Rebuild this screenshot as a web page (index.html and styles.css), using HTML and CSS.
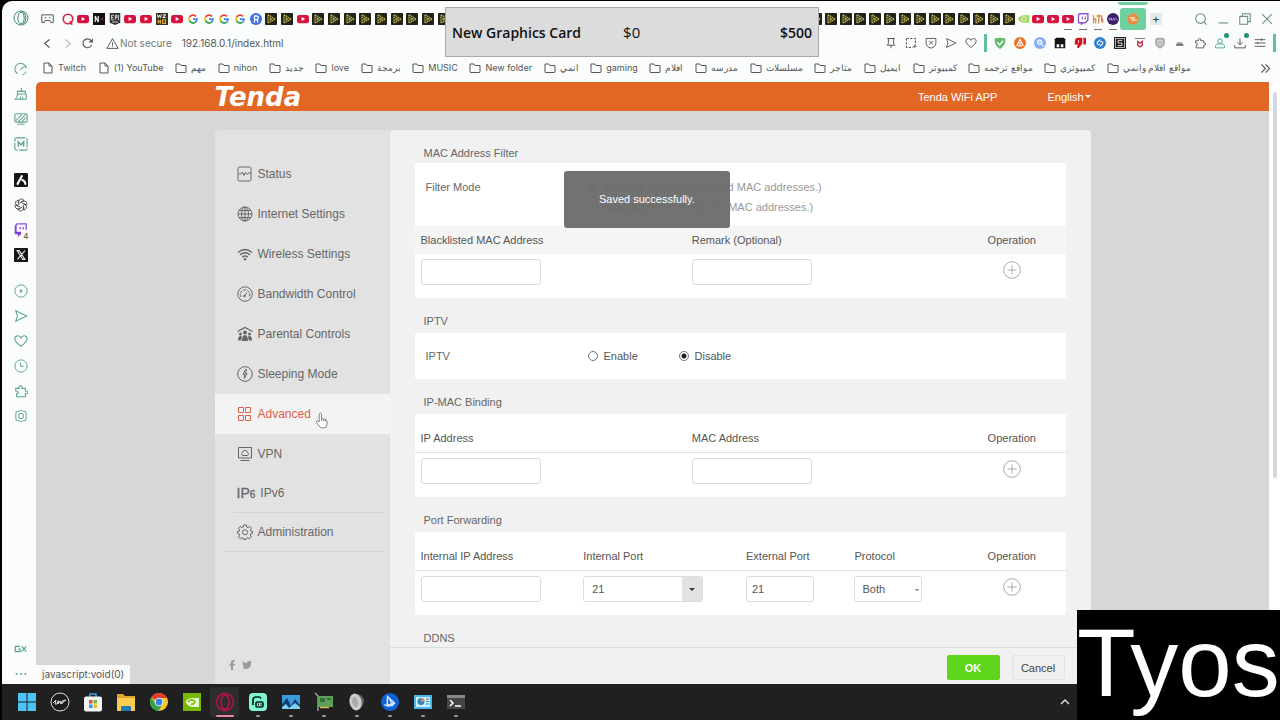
FILE: index.html
```html
<!DOCTYPE html>
<html lang="en">
<head>
    <meta charset="UTF-8">
    <title>Tenda | Advanced</title>
    <link rel="stylesheet" href="styles.css">
</head>
<body>
    <!-- icon sprite -->
    <svg class="sprite" aria-hidden="true">
        <symbol id="i-pad" viewBox="0 0 16 16"><path d="M1 3.500h14v9.500h-3l-1-2.500H5L4 13H1zM4.500 7h2M10 7h1.500" fill="none" stroke="currentColor" stroke-width="1.200"/></symbol>
        <symbol id="i-opera" viewBox="0 0 16 16"><circle cx="8" cy="8" r="7" fill="none" stroke="currentColor"/><ellipse cx="8" cy="8" rx="3.200" ry="5.800" fill="none" stroke="currentColor"/><path d="M9 1.500c5 2 5 11 0 13" fill="none" stroke="currentColor"/></symbol>
        <symbol id="i-q" viewBox="0 0 16 16"><circle cx="8" cy="8" r="6.300" fill="none" stroke="#d3264c" stroke-width="2.200"/><path d="M10.500 11l3 4.500" stroke="#d3264c" stroke-width="2.400"/></symbol>
        <symbol id="i-yt" viewBox="0 0 16 16"><rect y="2.500" width="16" height="11" rx="3" fill="#d8123f"/><path d="M6.200 5.300v5.400L11 8z" fill="#fff"/></symbol>
        <symbol id="i-n" viewBox="0 0 16 16"><rect width="16" height="16" fill="#111"/><path d="M3 12V4l4 8V4" fill="none" stroke="#eee" stroke-width="1.600"/><path d="M10 6l4 4M14 6l-4 4" stroke="#a33"/></symbol>
        <symbol id="i-epic" viewBox="0 0 16 16"><path d="M1 0h14v13l-7 3-7-3z" fill="#333"/><path d="M6.500 3H3.500v6h3M3.500 6h2M8.500 9V3h2v3h-2M13.500 3h-1v6h1M4 12h8" fill="none" stroke="#fff"/></symbol>
        <symbol id="i-wz" viewBox="0 0 16 16"><rect width="16" height="16" fill="#3a3126"/><path d="M2 2l1 4 1.500-3L6 6l1-4M9 2.500h4L9 6h4" fill="none" stroke="#fff" stroke-width="1.300"/><path d="M3 9v5M6 9v5M3 11.500h3M9 9v5h3.500V9z" fill="none" stroke="#e9b233" stroke-width="1.500"/></symbol>
        <symbol id="i-g" viewBox="0 0 16 16"><g fill="none" stroke-width="2.400"><path d="M12 4.500A5.300 5.300 0 0 0 3.500 5.500" stroke="#ea4335"/><path d="M3.500 5.300a5.300 5.300 0 0 0 0 5.400" stroke="#fbbc05"/><path d="M3.500 10.400a5.300 5.300 0 0 0 8 1.800" stroke="#34a853"/><path d="M8 8.200h5.200a5.300 5.300 0 0 1-1.800 4" stroke="#4285f4"/></g></symbol>
        <symbol id="i-r" viewBox="0 0 16 16"><circle cx="8" cy="8" r="8" fill="#3f6fe0"/><path d="M6 12.500V4h2.800a2.300 2.300 0 0 1 0 4.700H6M8.700 8.700L11 12.500" fill="none" stroke="#fff" stroke-width="1.700"/></symbol>
        <symbol id="i-play" viewBox="0 0 16 16"><rect width="16" height="16" rx="1" fill="#22241c"/><path d="M4 2.500l9.500 5.500L4 13.500z" fill="none" stroke="#c4b04c" stroke-width="1.800" stroke-dasharray="2 .8"/><path d="M6 5.500L10.500 8 6 10.500z" fill="#9aa84c"/></symbol>
        <symbol id="i-nv" viewBox="0 0 16 16"><path d="M0 8q3-5 8-5h7v10H8Q3 13 0 8z" fill="#a3d65c"/><circle cx="8" cy="8" r="3" fill="none" stroke="#fff"/></symbol>
        <symbol id="i-twitch" viewBox="0 0 16 16"><path d="M3 1h11.500v8.500L11 13H8l-2 2v-2H2V4z" fill="#fff" stroke="#8a54d8" stroke-width="1.800"/><path d="M7 4.500v4M11 4.500v4" stroke="#8a54d8" stroke-width="1.500"/></symbol>
        <symbol id="i-ht" viewBox="0 0 16 16"><path d="M2 3v11M2 8h3v6M9 2v12M6 4h6M13 3v9" fill="none" stroke="#d38a4a" stroke-width="1.700"/><path d="M12 7q4 0 2 6" fill="none" stroke="#b9482e"/></symbol>
        <symbol id="i-max" viewBox="0 0 16 16"><circle cx="8" cy="8" r="8" fill="#3b2268"/><path d="M3 10V6.500l1.500 2 1.500-2V10M7.500 10L9 6.500l1.500 3.500M11.500 6.500L14 10" fill="none" stroke="#cbb4ee"/></symbol>
        <symbol id="i-tenda" viewBox="0 0 16 16"><circle cx="8" cy="8" r="7.500" fill="#ee8a3c"/><path d="M3.500 6.500h7M7 6.500v4.500M8 9.500h5" stroke="#ffe9cf" stroke-width="1.600"/></symbol>

        <symbol id="i-page" viewBox="0 0 12 12"><path d="M2 1h5l3 3v7H2zM7 1v3h3" fill="none" stroke="currentColor"/></symbol>
        <symbol id="i-folder" viewBox="0 0 12 12"><path d="M1 2h4l1 1.500h5V10q0 .5-.5.500h-9Q1 10.500 1 10z" fill="none" stroke="currentColor"/></symbol>

        <symbol id="i-back" viewBox="0 0 16 16"><path d="M10.500 3l-6 5 6 5" fill="none" stroke="currentColor" stroke-width="1.500"/></symbol>
        <symbol id="i-fwd" viewBox="0 0 16 16"><path d="M5.500 3l6 5-6 5" fill="none" stroke="currentColor" stroke-width="1.500"/></symbol>
        <symbol id="i-reload" viewBox="0 0 16 16"><path d="M13 10a5.500 5.500 0 1 1-1-6l2 2M14 2v4h-4" fill="none" stroke="currentColor" stroke-width="1.400"/></symbol>
        <symbol id="i-warn" viewBox="0 0 16 16"><path d="M8 2l7 12H1zM8 6.500v4M8 11.500v1" fill="none" stroke="currentColor" stroke-width="1.200"/></symbol>
        <symbol id="i-pin" viewBox="0 0 16 16"><path d="M3 2h10M4.500 2v7L3 11h10l-1.500-2V2M8 11v4" fill="none" stroke="currentColor" stroke-width="1.300"/></symbol>
        <symbol id="i-snap" viewBox="0 0 16 16"><path d="M2 2h12v9M2 2v12h9" fill="none" stroke="currentColor" stroke-width="1.400" stroke-dasharray="3 2"/><path d="M13 10v5M10.500 12.500h5" stroke="currentColor"/></symbol>
        <symbol id="i-shieldx" viewBox="0 0 16 16"><path d="M1.500 2h13v7q0 4-6.500 6-6.500-2-6.500-6zM5.500 5l5 5M10.500 5l-5 5" fill="none" stroke="currentColor" stroke-width="1.200"/></symbol>
        <symbol id="i-send" viewBox="0 0 16 16"><path d="M2 2l12.500 6L2 14l2-6z" fill="none" stroke="currentColor" stroke-width="1.200"/></symbol>
        <symbol id="i-heart" viewBox="0 0 16 16"><path d="M8 14Q1 9 1 5.500 1.200 2 4.500 2 7 2 8 4.500 9 2 11.500 2 14.800 2 15 5.500 15 9 8 14z" fill="none" stroke="currentColor" stroke-width="1.200"/></symbol>
        <symbol id="i-adguard" viewBox="0 0 16 16"><path d="M1 2q7-2 14 0 1 9-7 14Q0 11 1 2z" fill="#62ba6b"/><path d="M4.500 7l3 3.500L12 5" fill="none" stroke="#fff" stroke-width="1.800"/></symbol>
        <symbol id="i-orange" viewBox="0 0 16 16"><circle cx="8" cy="8" r="8" fill="#e8722c"/><path d="M8 3l2.500 5h-5zM3.500 12l2-4M12.500 12l-2-4M5 12h2l1-2 1 2h2" fill="none" stroke="#fff" stroke-width="1.400"/></symbol>
        <symbol id="i-lens" viewBox="0 0 16 16"><circle cx="8" cy="8" r="8" fill="#86aef0"/><circle cx="7.500" cy="7" r="3.200" fill="#b9d2fb" stroke="#fff" stroke-width="1.300"/><path d="M10 9.500l3 3" stroke="#fff" stroke-width="1.500"/></symbol>
        <symbol id="i-tamper" viewBox="0 0 16 16"><path d="M3 1h10l2 2v12H1V3z" fill="#111"/><path d="M3.500 9.500h3.500v4H3.500zM9 9.500h3.500v4H9z" fill="#fff"/></symbol>
        <symbol id="i-down" viewBox="0 0 16 16"><path d="M11 1H5Q1 1 1 8v2h4l-1 4 2 1 5-6zM12.500 1H16v9h-3.500z" fill="#d4141f"/><path d="M6 4v4" stroke="#fff"/></symbol>
        <symbol id="i-shazam" viewBox="0 0 16 16"><circle cx="8" cy="8" r="8" fill="#2f80cf"/><path d="M8.500 3.500L5 6.500q-1.500 1.500 0 3 1.500 1 3 0M7.500 12.500L11 9.500q1.500-1.500 0-3-1.500-1-3 0" fill="none" stroke="#fff" stroke-width="1.600"/></symbol>
        <symbol id="i-box" viewBox="0 0 16 16"><rect width="16" height="16" fill="#222"/><rect x="2" y="2" width="12" height="12" fill="none" stroke="#ddd"/><path d="M11 4.500H5.500V8h5v3.500H5" fill="none" stroke="#ddd" stroke-width="1.300"/></symbol>
        <symbol id="i-mc" viewBox="0 0 16 16"><path d="M1 2h14" stroke="#888" stroke-width="1.500"/><path d="M5 6l3 2 3-2v5l-3 2-3-2z" fill="none" stroke="#c23a4b" stroke-width="2"/></symbol>
        <symbol id="i-gray" viewBox="0 0 16 16"><path d="M1.500 2L8 .5 14.500 2v7q-1 4-6.500 6.500Q2.500 13 1.500 9z" fill="#aaa"/><circle cx="8" cy="7.500" r="3.500" fill="none" stroke="#e8e8e8" stroke-width="1.300"/><path d="M8 5.500v4" stroke="#e8e8e8"/></symbol>
        <symbol id="i-hat" viewBox="0 0 16 16"><path d="M3 12V9l2-2h5l2 2v3z" fill="#999"/><path d="M3 10.500h10" stroke="#555"/></symbol>
        <symbol id="i-puzzle" viewBox="0 0 16 16"><path d="M2 5h4q-1-3 1.500-3T9 5h4v3q2.500-.5 2.500 1.500T13 11v3.500H3V11q2 0 2-1.500T2 8z" fill="none" stroke="currentColor" stroke-width="1.200"/></symbol>
        <symbol id="i-user" viewBox="0 0 16 16"><path d="M2 14.500v-3Q2 9 8 9t6 2.500v3z" fill="none" stroke="currentColor" stroke-width="1.300"/><circle cx="8" cy="5.500" r="3" fill="none" stroke="currentColor" stroke-width="1.300"/></symbol>
        <symbol id="i-dl" viewBox="0 0 16 16"><path d="M8 2v8M4.500 7L8 10.500 11.500 7M1 11v3.500h14V11" fill="none" stroke="currentColor" stroke-width="1.300"/></symbol>
        <symbol id="i-menu" viewBox="0 0 16 16"><path d="M1 3.500h14M1 8h14M1 12.500h14M10 2v3M5 6.500v3" fill="none" stroke="currentColor" stroke-width="1.200"/></symbol>
        <symbol id="i-search" viewBox="0 0 16 16"><circle cx="7.500" cy="7.500" r="5.500" fill="none" stroke="currentColor" stroke-width="1.200"/><path d="M11.500 11.500l3 3" stroke="currentColor" stroke-width="1.200"/></symbol>
        <symbol id="i-min" viewBox="0 0 16 16"><path d="M3 12.500h11" stroke="currentColor" stroke-width="1.300"/></symbol>
        <symbol id="i-restore" viewBox="0 0 16 16"><path d="M2 5h9v9H2zM5 5V2h9v9h-3" fill="none" stroke="currentColor" stroke-width="1.200"/></symbol>
        <symbol id="i-close" viewBox="0 0 16 16"><path d="M2.500 2.500l11 11M13.500 2.500l-11 11" stroke="currentColor" stroke-width="1.200"/></symbol>
        <symbol id="i-more" viewBox="0 0 16 16"><path d="M3 3l5 5-5 5M8 3l5 5-5 5" fill="none" stroke="currentColor" stroke-width="1.400"/></symbol>

        <symbol id="i-speed" viewBox="0 0 16 16"><path d="M4 13.500A6.500 6.500 0 1 1 14 7.500M7 9l5-4M9.500 14.500q3-.5 4.500-3.500" fill="none" stroke="currentColor" stroke-width="1.200"/></symbol>
        <symbol id="i-broom" viewBox="0 0 16 16"><path d="M8.500 1v4M4 5h9v3H4zM4 8q0 4-2.500 6H14V8M6 14q1.500-1 1.500-3M10 14v-3" fill="none" stroke="currentColor" stroke-width="1.200"/></symbol>
        <symbol id="i-screen" viewBox="0 0 16 16"><rect x="1" y="2" width="14" height="9.500" rx="1.500" fill="none" stroke="currentColor" stroke-width="1.300"/><path d="M2 10l7-7M5 11l8-8M9 11l5-5M4 14h8" stroke="currentColor" stroke-width="1.200"/></symbol>
        <symbol id="i-m" viewBox="0 0 16 16"><rect x="1" y="1" width="14" height="14" rx="2" fill="none" stroke="currentColor" stroke-width="1.300" stroke-dasharray="10 1.500"/><path d="M5 11V5.500l3 3.500 3-3.500V11" fill="none" stroke="currentColor" stroke-width="1.700"/></symbol>
        <symbol id="i-aria" viewBox="0 0 16 16"><rect width="16" height="16" rx="1.500" fill="#161616"/><path d="M9 3.500L4 12.500M9.500 8q3 1 3.500 4.500" fill="none" stroke="#fff" stroke-width="2.400" stroke-linecap="round"/></symbol>
        <symbol id="i-gpt" viewBox="0 0 16 16"><g fill="none" stroke="#444"><path id="petal" d="M5.500 8V3.800Q5.800 1.200 8.300 1q2 0 3 1.500L8 4.500"/><use href="#petal" transform="rotate(60 8 8)"/><use href="#petal" transform="rotate(120 8 8)"/><use href="#petal" transform="rotate(180 8 8)"/><use href="#petal" transform="rotate(240 8 8)"/><use href="#petal" transform="rotate(300 8 8)"/></g></symbol>
        <symbol id="i-twitch2" viewBox="0 0 16 16"><path d="M3 1h11v7M3 1L1.500 4v8H5v2.500L8 12" fill="none" stroke="#8a54d8" stroke-width="1.500"/><path d="M1.500 4L3 2v8h5v2l-3 2v-2H1.500z" fill="#7b3fd6"/><path d="M7 4.500v3M10.500 4.500v3" stroke="#8a54d8" stroke-width="1.500"/></symbol>
        <symbol id="i-x" viewBox="0 0 16 16"><rect width="16" height="16" rx="1" fill="#161616"/><path d="M3.500 3h2.500l6.500 10H10zM12.500 3L4 13" fill="none" stroke="#eee" stroke-width="1.200"/></symbol>
        <symbol id="i-player" viewBox="0 0 16 16"><circle cx="8" cy="8" r="7" fill="none" stroke="currentColor" stroke-width="1.100"/><path d="M6.800 5.500v5L10 8z" fill="currentColor"/></symbol>
        <symbol id="i-clock" viewBox="0 0 16 16"><circle cx="8" cy="8" r="7" fill="none" stroke="currentColor" stroke-width="1.100"/><path d="M7.500 4v4.500H11" fill="none" stroke="currentColor" stroke-width="1.100"/></symbol>
        <symbol id="i-gear" viewBox="0 0 16 16"><path d="M8 1l2 1.500 3.500.5.500 3.500v3l-.5 3.500-3.500.5L8 15l-2-1.500-3.500-.5L2 9.500v-3L2.500 3 6 2.500z" fill="none" stroke="currentColor" stroke-width="1.100"/><circle cx="8" cy="8" r="3" fill="none" stroke="currentColor" stroke-width="1.100"/></symbol>
        <symbol id="i-gx" viewBox="0 0 16 16"><path d="M7 5H1.500v6H7V8H4.500M9 5l5 6M14 5l-5 6" fill="none" stroke="currentColor" stroke-width="1.400"/></symbol>
        <symbol id="i-dots" viewBox="0 0 16 16"><circle cx="3" cy="8" r="1.200" fill="currentColor"/><circle cx="8" cy="8" r="1.200" fill="currentColor"/><circle cx="13" cy="8" r="1.200" fill="currentColor"/></symbol>

        <symbol id="m-status" viewBox="0 0 16 16"><rect x="1" y="1" width="13" height="14" rx="1.500" fill="none" stroke="currentColor"/><path d="M2 8h2l1.500-2 1.500 3.500L8.500 6.500l1.500 2 1.500-1.500H14" fill="none" stroke="currentColor"/></symbol>
        <symbol id="m-globe" viewBox="0 0 16 16"><g fill="none" stroke="currentColor"><circle cx="8" cy="8" r="7"/><ellipse cx="8" cy="8" rx="3.500" ry="7"/><path d="M8 1v14M1 8h14M2 4.500h12M2 11.500h12"/></g></symbol>
        <symbol id="m-wifi" viewBox="0 0 16 16"><path d="M1 6.500q7-6 14 0M3 9q5-4.500 10 0M5.200 11.300q2.800-2.500 5.600 0" fill="none" stroke="currentColor" stroke-width="1.300"/><circle cx="8" cy="13.300" r="1.200" fill="currentColor"/></symbol>
        <symbol id="m-gauge" viewBox="0 0 16 16"><circle cx="8" cy="8" r="7.200" fill="none" stroke="currentColor"/><path d="M4 11a4.700 4.700 0 1 1 8 0" fill="none" stroke="currentColor" stroke-dasharray="3 1"/><path d="M7.500 10l2.500-3.500" stroke="currentColor"/><circle cx="7.500" cy="10" r="1.200" fill="currentColor"/></symbol>
        <symbol id="m-family" viewBox="0 0 16 16"><path d="M.5 5.500L8 1.500l7.500 4" fill="none" stroke="currentColor" stroke-width="1.300"/><g fill="currentColor"><circle cx="8" cy="6.500" r="2"/><circle cx="3.500" cy="8" r="1.500"/><circle cx="12.500" cy="8" r="1.500"/><path d="M5 15q0-6 3-6t3 6zM1 14.500q0-4.500 2.500-4.500l1.500.5-.8 4zM15 14.500q0-4.500-2.500-4.500l-1.500.5.8 4z"/></g></symbol>
        <symbol id="m-sleep" viewBox="0 0 16 16"><circle cx="8" cy="8" r="7.300" fill="none" stroke="currentColor"/><path d="M8.500 3.500L6 8.500h2L7.200 12.500 10 7.500H8.300L9.500 3.500z" fill="none" stroke="currentColor"/></symbol>
        <symbol id="m-grid" viewBox="0 0 16 16"><path d="M1.500 1.500h5v5h-5zM8.500 1.500h5v5h-5zM1.500 9.500h5v5h-5zM8.500 9.500h5v5h-5z" fill="none" stroke="currentColor"/></symbol>
        <symbol id="m-vpn" viewBox="0 0 16 16"><path d="M1.500 1.500h13v10.500h-13zM3.500 14.500h9" fill="none" stroke="currentColor"/><path d="M5.500 9.500a2 2 0 0 1 .3-3.500 2.300 2.300 0 0 1 4.400 0 2 2 0 0 1 .3 3.500z" fill="none" stroke="currentColor"/></symbol>
        <symbol id="m-cog" viewBox="0 0 16 16"><path d="M6.700 1h2.600l.4 2 1.300.6 1.800-1.200 1.800 1.800L13.400 6l.5 1.300 1.600.3v1.800l-1.800.5-.5 1.300 1.200 1.800-1.800 1.800-1.800-1.200-1.300.5-.4 1.400H6.700l-.4-1.400-1.300-.5-1.800 1.200L1.400 13l1.200-1.800-.5-1.300-1.600-.5V7.600l1.600-.3L2.600 6 1.400 4.200l1.800-1.800L5 3.600 6.300 3z" fill="none" stroke="currentColor"/><circle cx="8" cy="8.300" r="2.500" fill="none" stroke="currentColor"/></symbol>
        <symbol id="m-add" viewBox="0 0 18 18"><circle cx="9" cy="9" r="8.300" fill="none" stroke="currentColor"/><path d="M9 4.500v9M4.500 9h9" stroke="currentColor"/></symbol>
    </svg>

    <div class="browser">
        <aside class="gx-bar">
            <svg class="gx-logo"><use href="#i-opera"/></svg>
            <div class="gx-group">
                <svg><use href="#i-speed"/></svg>
                <svg><use href="#i-broom"/></svg>
                <svg><use href="#i-screen"/></svg>
                <svg><use href="#i-m"/></svg>
            </div>
            <div class="gx-group">
                <svg><use href="#i-aria"/></svg>
                <svg><use href="#i-gpt"/></svg>
                <span class="gx-badged"><svg><use href="#i-twitch2"/></svg><b>4</b></span>
                <svg><use href="#i-x"/></svg>
            </div>
            <div class="gx-group">
                <svg><use href="#i-player"/></svg>
                <svg><use href="#i-send"/></svg>
                <svg><use href="#i-heart"/></svg>
                <svg><use href="#i-clock"/></svg>
                <svg><use href="#i-puzzle"/></svg>
                <svg><use href="#i-gear"/></svg>
            </div>
            <div class="gx-group gx-bottom">
                <svg><use href="#i-gx"/></svg>
                <svg><use href="#i-dots"/></svg>
            </div>
        </aside>

        <div class="window">
            <div class="tab-bar">
                <svg class="tab-pad"><use href="#i-pad"/></svg>
                <div class="tabs tabs-left" id="tabs-left"></div>
                <div class="tabs tabs-right" id="tabs-right"></div>
                <div class="tab-active"><svg><use href="#i-tenda"/></svg></div>
                <button class="tab-new" aria-label="New tab">+</button>
                <div class="window-controls">
                    <svg><use href="#i-search"/></svg>
                    <svg><use href="#i-min"/></svg>
                    <svg><use href="#i-restore"/></svg>
                    <svg><use href="#i-close"/></svg>
                </div>
            </div>

            <div class="address-bar">
                <div class="nav-buttons">
                    <svg><use href="#i-back"/></svg>
                    <svg class="disabled"><use href="#i-fwd"/></svg>
                    <svg><use href="#i-reload"/></svg>
                </div>
                <div class="site-info"><svg><use href="#i-warn"/></svg>Not secure</div>
                <div class="url">192.168.0.1/index.html</div>
                <div class="tools">
                    <svg><use href="#i-pin"/></svg>
                    <svg><use href="#i-snap"/></svg>
                    <svg><use href="#i-shieldx"/></svg>
                    <svg><use href="#i-send"/></svg>
                    <svg><use href="#i-heart"/></svg>
                </div>
                <i class="green-bar"></i>
                <div class="tools">
                    <svg><use href="#i-adguard"/></svg>
                    <svg><use href="#i-orange"/></svg>
                    <svg><use href="#i-lens"/></svg>
                    <svg><use href="#i-tamper"/></svg>
                    <svg><use href="#i-down"/></svg>
                    <svg><use href="#i-shazam"/></svg>
                    <svg><use href="#i-box"/></svg>
                    <svg><use href="#i-mc"/></svg>
                    <svg><use href="#i-gray"/></svg>
                    <svg><use href="#i-hat"/></svg>
                    <svg><use href="#i-puzzle"/></svg>
                    <span class="notify green"><svg><use href="#i-user"/></svg></span>
                    <span class="notify"><svg><use href="#i-dl"/></svg></span>
                    <svg><use href="#i-menu"/></svg>
                </div>
                <i class="green-bar"></i>
            </div>

            <div class="bookmark-bar">
                <div class="bookmarks" id="bookmarks"></div>
                <svg class="more"><use href="#i-more"/></svg>
            </div>

            <div class="viewport">
                <div class="page">
                    <header class="top-bar">
                        <div class="container">
                            <a href="#" class="logo">Tenda</a>
                            <a href="#" class="top-link">Tenda WiFi APP</a>
                            <button class="language">English<i class="caret"></i></button>
                        </div>
                    </header>

                    <div class="container layout">
                        <nav class="menu">
                            <a href="#" class="menu-item"><svg><use href="#m-status"/></svg>Status</a>
                            <a href="#" class="menu-item"><svg><use href="#m-globe"/></svg>Internet Settings</a>
                            <a href="#" class="menu-item"><svg><use href="#m-wifi"/></svg>Wireless Settings</a>
                            <a href="#" class="menu-item"><svg><use href="#m-gauge"/></svg>Bandwidth Control</a>
                            <a href="#" class="menu-item"><svg><use href="#m-family"/></svg>Parental Controls</a>
                            <a href="#" class="menu-item"><svg><use href="#m-sleep"/></svg>Sleeping Mode</a>
                            <a href="#" class="menu-item active"><svg><use href="#m-grid"/></svg>Advanced
                                <svg class="cursor" viewBox="0 0 14 18"><path d="M4.500 10V2.500q0-1.500 1.200-1.500T7 2.500V7l4.500 1q1.500.5 1.500 2v3q0 4-4 4H7.500Q6 17 5 15.500L1.500 11q-.5-1.500.7-1.800 1 0 2.300 1.500zM7 7v2.500M9.300 7.500v2.300M11.300 8v2" fill="#fff" stroke="#777"/></svg>
                            </a>
                            <a href="#" class="menu-item"><svg><use href="#m-vpn"/></svg>VPN</a>
                            <a href="#" class="menu-item lined"><span class="ip-icon">IP<small>6</small></span>IPv6</a>
                            <a href="#" class="menu-item lined wide"><svg><use href="#m-cog"/></svg>Administration</a>
                            <div class="social">
                                <svg viewBox="0 0 10 10"><path d="M8 1.500H7Q6 1.500 6 2.500v1.300h2L7.700 5.500H6V10H4V5.500H2.500V3.800H4V2.300Q4 0 6.300 0H8z" fill="#999"/></svg>
                                <svg viewBox="0 0 10 10"><path d="M10 2L9 3Q9 9 3.500 9 1.500 9 0 8q1.500 0 2.700-.8Q1.200 7 1 5.700h.8Q.4 5.200.4 3.600l.8.300Q0 2.800.8 1.300 2.500 3.200 4.900 3.300 4.700 1 6.900 1q.8 0 1.400.6L9.600 1.200 9 2.200z" fill="#999"/></svg>
                            </div>
                        </nav>

                        <main class="panel">
                            <div class="panel-body">
                                <h2>MAC Address Filter</h2>
                                <section class="card">
                                    <div class="filter-mode">
                                        <div class="form-row">
                                            <span class="form-label">Filter Mode</span>
                                            <label class="radio"><input type="radio" name="filter" checked>Blacklist <em>(Forbid only listed MAC addresses.)</em></label>
                                        </div>
                                        <div class="form-row">
                                            <span class="form-label"></span>
                                            <label class="radio"><input type="radio" name="filter">Whitelist <em>(Permit only the MAC addresses.)</em></label>
                                        </div>
                                    </div>
                                    <table class="shaded">
                                        <colgroup><col class="c5"><col class="c5"><col class="c2"></colgroup>
                                        <thead><tr><th>Blacklisted MAC Address</th><th>Remark (Optional)</th><th class="op">Operation</th></tr></thead>
                                        <tbody><tr>
                                            <td><input type="text" class="field" aria-label="Blacklisted MAC Address"></td>
                                            <td><input type="text" class="field" aria-label="Remark"></td>
                                            <td class="op"><button class="add" aria-label="Add"><svg><use href="#m-add"/></svg></button></td>
                                        </tr></tbody>
                                    </table>
                                </section>

                                <h2>IPTV</h2>
                                <section class="card">
                                    <div class="form-row tall">
                                        <span class="form-label">IPTV</span>
                                        <label class="radio"><input type="radio" name="iptv">Enable</label>
                                        <label class="radio"><input type="radio" name="iptv" checked>Disable</label>
                                    </div>
                                </section>

                                <h2>IP-MAC Binding</h2>
                                <section class="card">
                                    <table>
                                        <colgroup><col class="c5"><col class="c5"><col class="c2"></colgroup>
                                        <thead><tr><th>IP Address</th><th>MAC Address</th><th class="op">Operation</th></tr></thead>
                                        <tbody><tr>
                                            <td><input type="text" class="field" aria-label="IP Address"></td>
                                            <td><input type="text" class="field" aria-label="MAC Address"></td>
                                            <td class="op"><button class="add" aria-label="Add"><svg><use href="#m-add"/></svg></button></td>
                                        </tr></tbody>
                                    </table>
                                </section>

                                <h2>Port Forwarding</h2>
                                <section class="card">
                                    <table>
                                        <colgroup><col class="c3"><col class="c3"><col class="c2"><col class="c2"><col class="c2"></colgroup>
                                        <thead><tr><th>Internal IP Address</th><th>Internal Port</th><th>External Port</th><th>Protocol</th><th class="op">Operation</th></tr></thead>
                                        <tbody><tr>
                                            <td><input type="text" class="field" aria-label="Internal IP Address"></td>
                                            <td><div class="combo"><input type="text" value="21" aria-label="Internal Port"><button aria-label="Choose port"><i class="caret"></i></button></div></td>
                                            <td><input type="text" class="field short" value="21" aria-label="External Port"></td>
                                            <td><select class="field short" aria-label="Protocol"><option>Both</option><option>TCP</option><option>UDP</option></select></td>
                                            <td class="op"><button class="add" aria-label="Add"><svg><use href="#m-add"/></svg></button></td>
                                        </tr></tbody>
                                    </table>
                                </section>

                                <h2>DDNS</h2>
                            </div>
                            <footer class="actions">
                                <button class="btn btn-ok">OK</button>
                                <button class="btn">Cancel</button>
                            </footer>
                        </main>
                    </div>
                </div>
                <div class="scrollbar"><i></i></div>
                <div class="toast">Saved successfully.</div>
                <div class="status-text">javascript:void(0)</div>
            </div>
        </div>
    </div>

    <div class="taskbar">
        <div class="task"><svg viewBox="0 0 20 20"><path d="M1 1h8.500v8.500H1zM10.500 1H19v8.500h-8.500zM1 10.500h8.500V19H1zM10.500 10.500H19V19h-8.500z" fill="#4cc2f5"/></svg></div>
        <div class="task"><svg viewBox="0 0 20 20"><circle cx="10" cy="10" r="9" fill="#1c1c1c" stroke="#ddd"/><path d="M3 11l3-3-1 4h2l1-3h1l-1 3 2-3 1 3 1-3 4-1-3 2-1 2" fill="none" stroke="#ddd"/></svg></div>
        <div class="task"><svg viewBox="0 0 20 20"><path d="M7 5V2h6v3" fill="none" stroke="#3aa0e0" stroke-width="1.500"/><rect x="1" y="4.500" width="18" height="15" rx="2" fill="#f3f3f3"/><path d="M6 8h3.500v3.500H6z" fill="#e8512f"/><path d="M10.500 8H14v3.500h-3.500z" fill="#7db92c"/><path d="M6 12.500h3.500V16H6z" fill="#2b9fe0"/><path d="M10.500 12.500H14V16h-3.500z" fill="#f5b822"/></svg></div>
        <div class="task"><svg viewBox="0 0 20 20"><path d="M1 2h6l2 2h10v14H1z" fill="#e0a526"/><path d="M1 6h18v13H1z" fill="#f8cd52"/><path d="M5 19v-4q0-1 1-1h8q1 0 1 1v4z" fill="#2379b5"/></svg></div>
        <div class="task"><svg viewBox="0 0 20 20"><circle cx="10" cy="10" r="9" fill="#f7c52d"/><path d="M10 10L2.200 5.500A9 9 0 0 1 18 6h-8z" fill="#df3e31"/><path d="M2.200 5.500A9 9 0 0 0 9.500 19l4-7H7z" fill="#35a053"/><circle cx="10" cy="10" r="4.300" fill="#fff"/><circle cx="10" cy="10" r="3.400" fill="#3b7ded"/></svg></div>
        <div class="task"><svg viewBox="0 0 20 20"><rect x="1" y="1" width="18" height="18" fill="#77b900"/><path d="M3.500 10Q6 6 10 6h7v9h-7Q5.500 14 3.500 10z" fill="#e9f5d0"/><path d="M6 10q2-3 5-2 2 1 2 2-2 3-4 2" fill="none" stroke="#77b900" stroke-width="1.400"/></svg></div>
        <div class="task current"><svg viewBox="0 0 20 20"><circle cx="10" cy="10" r="8.500" fill="none" stroke="#a31843" stroke-width="1.800"/><ellipse cx="10" cy="10" rx="4" ry="7" fill="none" stroke="#a31843" stroke-width="1.800"/></svg></div>
        <div class="task running"><svg viewBox="0 0 20 20"><rect x="1" y="1" width="18" height="18" rx="4" fill="#80f5d2"/><path d="M13 6.500q-.5-1.500-2-1.500H8Q5 5 5 8v5M9 15h4.500q1.500 0 1.500-1.500v-2Q15 10 13.500 10H9.500Q8 10 8 11.500v2Q8 15 9 15z" fill="none" stroke="#09211c" stroke-width="1.700"/><path d="M10.500 11.500v2M13 11.500v2" stroke="#09211c"/></svg></div>
        <div class="task running"><svg viewBox="0 0 20 20"><path d="M1 3h18v14H1z" fill="#3d9bdd"/><path d="M1 12l5-6 4 8 4-7 5 6v4H1z" fill="#123f70"/><path d="M1 15l4-3 3 4 6-5 5 4v2H1z" fill="#7ed0f5"/></svg></div>
        <div class="task running"><svg viewBox="0 0 20 20"><path d="M1 1l3 3v15" fill="none" stroke="#aaa" stroke-width="1.300"/><path d="M4 4h15v11H4z" fill="#5fa05b"/><path d="M6 6h5v4H6zM13 6h4v2h-4z" fill="#356f36"/><path d="M6 15.500h9" stroke="#d5bd4e" stroke-width="1.500"/></svg></div>
        <div class="task running"><svg viewBox="0 0 20 20"><path d="M9 2q7 0 8 7-1 9-9 9z" fill="#666"/><ellipse cx="8.500" cy="10" rx="6" ry="8.500" fill="#ccc" transform="rotate(-12 8.500 10)"/><ellipse cx="8" cy="10" rx="2.800" ry="5" fill="#aaa" transform="rotate(-12 8 10)"/></svg></div>
        <div class="task running"><svg viewBox="0 0 20 20"><circle cx="10" cy="10" r="9" fill="#0f63d6"/><path d="M7.500 4.500l6.500 6-7 3zM7.500 4.500V14M4 12.500q6 4 11-1.500M9 6l4 8" fill="none" stroke="#d9ecff" stroke-width="1.300"/></svg></div>
        <div class="task running"><svg viewBox="0 0 20 20"><path d="M1 3h18v14H1z" fill="#4fb7e8"/><path d="M3 5h14v10H3z" fill="#cdeefb"/><circle cx="8" cy="9.500" r="3.500" fill="#3083be"/><path d="M8 9.500V6a3.500 3.500 0 0 1 3.500 3.500z" fill="#f08a3c"/><path d="M13 7h3M13 9.500h3M13 12h3" stroke="#3083be"/></svg></div>
        <div class="task running"><svg viewBox="0 0 20 20"><path d="M1 3h18v14H1z" fill="#454545"/><path d="M1 3h18v3H1z" fill="#888"/><path d="M4 8l3 3-3 3M9 14h6" fill="none" stroke="#fff" stroke-width="1.500"/></svg></div>
        <svg class="tray" viewBox="0 0 10 10"><path d="M1 7l4-4 4 4" fill="none" stroke="#ddd" stroke-width="1.500"/></svg>
    </div>

    <div class="goal"><b>New Graphics Card</b><span>$0</span><b class="goal-total">$500</b></div>
    <div class="nameplate">Tyos</div>

    <script>
        const leftTabs = 'q yt n epic yt yt wz yt g g g g r play play yt'.split(' ').concat(Array(10).fill('play'));
        const rightTabs = Array(37).fill('play').concat('nv yt yt yt twitch ht max'.split(' '));

        const bookmarks = [
            'Twitch', '(1) YouTube', 'مهم', 'nihon', 'جديد', 'love', 'برمجة', 'MUSIC', 'New folder', 'انمي',
            'gaming', 'افلام', 'مدرسه', 'مسلسلات', 'متاجر', 'ايميل', 'كمبيوتر', 'مواقع ترجمه', 'كمبيوتري', 'مواقع افلام وانمي'
        ];

        function icon(id) {
            return `<svg><use href="#i-${id}"/></svg>`;
        }

        function renderTabs(id, tabs) {
            document.getElementById(id).innerHTML = tabs.map(t => `<span class="tab">${icon(t)}</span>`).join('');
        }

        renderTabs('tabs-left', leftTabs);
        renderTabs('tabs-right', rightTabs);

        // the first two bookmarks are pages, the rest are folders
        document.getElementById('bookmarks').innerHTML = bookmarks.map((name, i) =>
            `<a href="#" class="bookmark">${icon(i < 2 ? 'page' : 'folder')}<bdi>${name}</bdi></a>`).join('');
    </script>
</body>
</html>
```

FILE: styles.css
```css
* {
    box-sizing: border-box;
}

body {
    margin: 0;
    height: 100vh;
    display: flex;
    flex-direction: column;
    overflow: hidden;
    background: #000;
    font-family: "Liberation Sans", Arial, sans-serif;
    font-size: 11px;
    color: #555;
}

a {
    color: inherit;
    text-decoration: none;
}

button, input, select {
    font: inherit;
    color: inherit;
}

button {
    border: none;
    background: none;
    padding: 0;
}

svg {
    display: block;
    flex: none;
}

.sprite {
    position: absolute;
    width: 0;
    height: 0;
}

/* Browser window */
.browser {
    flex: 1;
    min-height: 0;
    display: flex;
    margin: 1px 0 0 2px;
    background: #fafdfb;
    border-top-left-radius: 10px;
    font-family: Inter, sans-serif;
}

.gx-bar {
    width: 34px;
    display: flex;
    flex-direction: column;
    align-items: center;
    padding: 9px 0 3px 3px;
    color: #5fa588;
}

.gx-bar svg {
    width: 14px;
    height: 14px;
}

.gx-bar .gx-logo {
    width: 16px;
    height: 16px;
    margin-bottom: 36px;
    color: #3f8a6c;
}

.gx-group {
    display: flex;
    flex-direction: column;
    gap: 11px;
    margin-bottom: 22px;
}

.gx-bottom {
    margin: auto 0 0;
}

.gx-badged {
    position: relative;
}

.gx-badged b {
    position: absolute;
    right: -1px;
    bottom: -4px;
    font-size: 8px;
    font-weight: 500;
    color: #555;
}

.window {
    flex: 1;
    min-width: 0;
    display: flex;
    flex-direction: column;
}

.tab-bar {
    height: 33px;
    display: flex;
    align-items: center;
    padding: 2px 4px 0 5px;
    color: #6b8f80;
}

.tab-pad {
    width: 13px;
    height: 13px;
    margin-right: 6px;
    color: #555;
}

.tabs {
    display: flex;
    min-width: 0;
}

.tabs-left {
    width: 407px;
}

.tabs-right {
    flex: 1;
}

.tab {
    flex: 1;
    min-width: 0;
    display: flex;
    justify-content: center;
}

.tab svg {
    width: 12px;
    height: 12px;
}

.tabs-right .tab:nth-last-child(-n+4) {
    position: relative;
}

.tabs-right .tab:nth-last-child(-n+4)::after {
    content: "";
    position: absolute;
    bottom: -5px;
    width: 8px;
    height: 1px;
    background: #777;
}

.tab-active {
    position: relative;
    width: 26px;
    height: 22px;
    display: flex;
    align-items: center;
    justify-content: center;
    border-radius: 3px;
    background: #6fcf9f;
}

.tab-active::before {
    content: "";
    position: absolute;
    top: -6px;
    width: 30px;
    height: 3px;
    border-radius: 0 0 3px 3px;
    background: #6fcf9f;
}

.tab-active svg {
    width: 12px;
    height: 12px;
}

.tab-new {
    width: 12px;
    height: 12px;
    margin: 0 30px 0 4px;
    background: #e6ebe8;
    line-height: 12px;
    font-size: 12px;
    color: #444;
}

.window-controls {
    display: flex;
    gap: 8px;
    padding: 0 2px;
}

.window-controls svg {
    width: 14px;
    height: 14px;
}

.address-bar {
    height: 18px;
    display: flex;
    align-items: center;
    padding: 0 4px 0 5px;
    font-size: 10px;
    color: #555;
}

.nav-buttons {
    display: flex;
    gap: 7px;
}

.nav-buttons svg {
    width: 13px;
    height: 13px;
}

.disabled {
    color: #bbb;
}

.site-info {
    display: flex;
    align-items: center;
    margin-left: 12px;
    color: #777;
}

.site-info svg {
    width: 13px;
    height: 13px;
    color: #555;
    margin-right: 1px;
}

.url {
    flex: 1;
    margin-left: 10px;
}

.tools {
    display: flex;
    gap: 8px;
    padding: 0 7px;
}

.tools svg {
    width: 12px;
    height: 12px;
}

.green-bar {
    flex: none;
    width: 3px;
    height: 18px;
    background: #63bf97;
}

.notify {
    position: relative;
}

.notify.green {
    color: #4fae86;
}

.notify::after {
    content: "";
    position: absolute;
    top: -4px;
    right: -3px;
    width: 5px;
    height: 5px;
    border-radius: 50%;
    background: #239467;
}

.bookmark-bar {
    height: 30px;
    display: flex;
    align-items: center;
    justify-content: space-between;
    padding: 2px 8px 0 6px;
    font-size: 9px;
    color: #555;
}

.bookmarks {
    flex: 0 1 1149px;
    display: flex;
    justify-content: space-between;
}

.bookmark {
    display: flex;
    align-items: center;
    gap: 4px;
    white-space: nowrap;
    line-height: 14px;
}

.bookmark svg {
    width: 12px;
    height: 12px;
}

.more {
    width: 13px;
    height: 13px;
}

/* Router admin page */
.viewport {
    position: relative;
    flex: 1;
    min-height: 0;
    display: flex;
    font-family: "Liberation Sans", Arial, sans-serif;
}

.page {
    flex: 1;
    display: flex;
    flex-direction: column;
    background: #d7d7d7;
    border-top-left-radius: 5px;
    overflow: hidden;
}

.container {
    width: 100%;
    max-width: 876px;
    margin: 0 auto;
}

.top-bar {
    background: #e26724;
    color: #fff;
}

.top-bar .container {
    display: flex;
    align-items: center;
    height: 29px;
}

.logo {
    flex: 1;
    font-family: "DejaVu Sans", sans-serif;
    font-size: 26px;
    line-height: 28px;
    font-weight: bold;
    font-style: italic;
}

.top-link {
    margin-right: 50px;
}

.language {
    display: flex;
    align-items: center;
    gap: 1px;
}

.caret {
    border: 3px solid transparent;
    border-top-color: currentColor;
    border-bottom: none;
}

.layout {
    flex: 1;
    min-height: 0;
    display: flex;
    padding-top: 19px;
}

.menu {
    width: 175px;
    display: flex;
    flex-direction: column;
    padding-top: 24px;
    background: #e2e2e2;
    border-top-left-radius: 4px;
    font-size: 12px;
    color: #666;
}

.menu-item {
    position: relative;
    display: flex;
    align-items: center;
    gap: 5px;
    height: 40px;
    padding-left: 22px;
}

.menu-item svg {
    width: 16px;
    height: 16px;
}

.menu-item.active {
    background: #f3f3f3;
    color: #e0604a;
}

.menu-item .cursor {
    position: absolute;
    left: 100px;
    top: 18px;
    width: 13px;
    height: 17px;
}

.menu-item.lined {
    height: 39px;
    margin: 0 6px 0 18px;
    padding-left: 4px;
    border-bottom: 1px solid #d3d3d3;
}

.menu-item.wide {
    margin-left: 9px;
    padding-left: 13px;
}

.ip-icon {
    font-size: 14px;
    -webkit-text-stroke: 0.3px;
}

.ip-icon small {
    font-size: 10px;
}

.social {
    display: flex;
    gap: 5px;
    margin-top: auto;
    padding: 0 12px 14px;
}

.social svg {
    width: 10px;
    height: 10px;
}

.panel {
    flex: 1;
    min-width: 0;
    display: flex;
    flex-direction: column;
    background: #f1f1f1;
    border-radius: 4px 4px 0 0;
}

.panel-body {
    flex: 1;
    min-height: 0;
    overflow: hidden;
    padding: 0 25px;
}

.panel h2 {
    margin: 0;
    padding: 14px 9px 3px;
    font-size: 11px;
    line-height: 18px;
    font-weight: normal;
    color: #666;
}

.panel h2:first-child {
    padding-bottom: 1px;
}

.card {
    background: #fff;
    border-radius: 2px;
}

.filter-mode {
    padding: 14px 0 9px;
}

.form-row {
    display: flex;
    align-items: center;
    height: 20px;
}

.form-row.tall {
    height: 46px;
}

.form-label {
    width: 173px;
    padding-left: 11px;
    color: #666;
}

.radio {
    display: flex;
    align-items: center;
    min-width: 91px;
    white-space: pre;
}

.radio em {
    font-style: normal;
    color: #999;
}

.radio input {
    appearance: none;
    width: 10px;
    height: 10px;
    margin: 0 6px 0 0;
    border: 1px solid #777;
    border-radius: 50%;
    background: #fff;
}

.radio input:checked {
    background: radial-gradient(circle, #222 0 2px, #fff 3px);
}

table {
    width: 100%;
    table-layout: fixed;
    border-collapse: separate;
    border-spacing: 0;
}

.c5 {
    width: 41.666%;
}

.c3 {
    width: 25%;
}

.c2 {
    width: 16.666%;
}

th {
    padding: 15px 5px 5px 6px;
    border-bottom: 1px solid #e2e2e2;
    line-height: 18px;
    font-weight: normal;
    text-align: left;
}

.shaded th {
    padding-top: 5px;
    background: #f5f5f5;
    border-bottom: none;
}

td {
    padding: 5px 5px 13px 6px;
    vertical-align: top;
}

th.op, td.op {
    text-align: center;
}

.field {
    display: block;
    width: 120px;
    height: 26px;
    padding: 0 5px;
    border: 1px solid #dcdcdc;
    border-radius: 3px;
    background: #fff;
}

.field.short {
    width: 68px;
}

select.field {
    padding: 0 7px;
    appearance: none;
    background: linear-gradient(#999, #999) 60px 12px / 4px 1px no-repeat, linear-gradient(#999, #999) 61px 13px / 2px 1px no-repeat, #fff;
}

.combo {
    display: flex;
    width: 120px;
    height: 26px;
    border: 1px solid #dcdcdc;
    border-radius: 3px;
    overflow: hidden;
}

.combo input {
    flex: 1;
    min-width: 0;
    padding: 0 8px;
    border: none;
}

.combo button {
    width: 20px;
    display: flex;
    align-items: center;
    justify-content: center;
    background: #e2e2e2;
    color: #333;
}

.add {
    display: inline-block;
    margin-top: 2px;
    color: #aaa;
}

.add svg {
    width: 18px;
    height: 18px;
}

.actions {
    display: flex;
    gap: 12px;
    justify-content: flex-end;
    padding: 7px 26px 4px;
    border-top: 1px solid #dedede;
}

.btn {
    width: 53px;
    height: 25px;
    border: 1px solid #e3e3e3;
    border-radius: 2px;
    background: #f0f0f0;
    color: #444;
}

.btn-ok {
    border-color: #5fd51c;
    background: #5fd51c;
    color: #fff;
    font-weight: bold;
}

.scrollbar {
    width: 11px;
    padding: 10px 3px 0 4px;
    background: #fff;
}

.scrollbar i {
    display: block;
    height: 386px;
    border-radius: 2px;
    background: #d4d8da;
}

.toast {
    position: absolute;
    top: 89px;
    left: 528px;
    padding: 20px 35px;
    border-radius: 3px;
    background: rgba(108, 108, 108, 0.96);
    line-height: 17px;
    color: #fff;
}

.status-text {
    position: absolute;
    left: 0;
    bottom: 0;
    padding: 0 6px;
    background: #fbfbfb;
    font-family: Inter, sans-serif;
    font-size: 10px;
    line-height: 19px;
}

/* Taskbar */
.taskbar {
    height: 36px;
    display: flex;
    align-items: center;
    margin-left: 2px;
    padding: 0 0 0 10px;
    background: #202020;
}

.task {
    position: relative;
    width: 29px;
    height: 30px;
    margin-right: 4px;
    display: flex;
    align-items: center;
    justify-content: center;
}

.task svg {
    width: 20px;
    height: 20px;
}

.task.current {
    background: #2d2d2d;
    border-radius: 2px;
}

.task.running::after, .task.current::after {
    content: "";
    position: absolute;
    bottom: 0;
    width: 4px;
    height: 2px;
    border-radius: 1px;
    background: #999;
}

.task.current::after {
    width: 18px;
    background: #e58aa3;
}

.tray {
    width: 10px;
    height: 10px;
    margin-left: auto;
    margin-right: 210px;
}

/* Stream overlays */
.goal {
    position: absolute;
    top: 7px;
    left: 445px;
    width: 374px;
    height: 50px;
    display: flex;
    align-items: center;
    padding: 0 6px;
    border: 1px solid #aaa;
    background: #dcdcdc;
    font-family: "Open Sans", "Noto Sans", sans-serif;
    font-size: 15px;
    color: #111;
}

.goal b {
    font-size: 14px;
    font-weight: 600;
}

.goal span {
    margin-left: 42px;
}

.goal .goal-total {
    margin-left: auto;
}

.nameplate {
    position: absolute;
    right: 0;
    bottom: 0;
    width: 203px;
    height: 110px;
    background: #000;
    color: #fff;
    font-size: 96px;
    line-height: 106px;
    white-space: nowrap;
    overflow: hidden;
}
```
